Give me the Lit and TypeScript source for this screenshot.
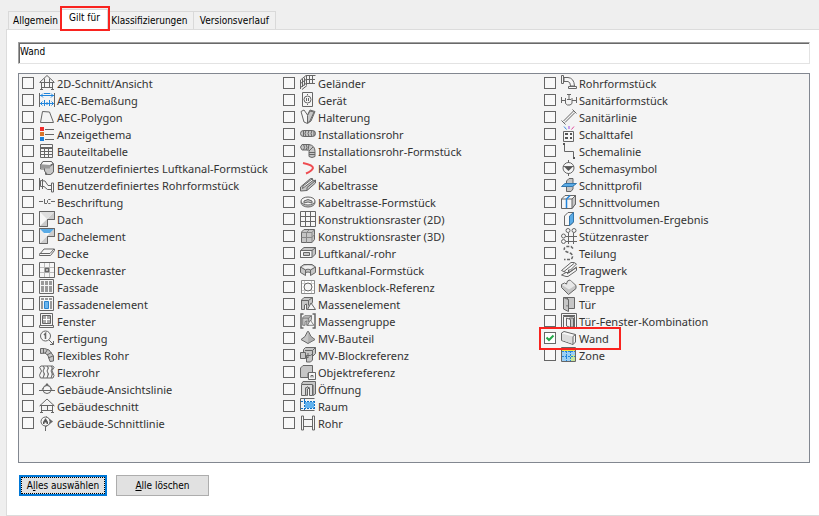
import { LitElement, html, svg, css, SVGTemplateResult } from "lit";
import { customElement, property, state } from "lit/decorators.js";

const mass = svg`<path class="m" d="M1.500 13.500V4L4 1.500h8.500V6L9 13.500H6.500V8L4.500 9v4.500z"/><path class="l" d="M1.500 4.500h7v5M8.500 4.500l4-3"/><path class="w" d="M7.500 13.500L11 7l4.500 6.500z"/>`;

const icons: Record<string, SVGTemplateResult> = {
  section: svg`<path class="l" d="M.500 7.500L8 .500l7.500 7M2.500 7v7.500M13.500 7v7.500M1 7.500h14M3 12.500h10M5.500 3.500v9M10.500 3.500v9M1 14.500h3M12 14.500h3"/>`,
  houseCut: svg`<path class="l" d="M.500 8L8 1l7.500 7M2.500 7v7M13.500 7v7M1 7.500h14M3 12.500h10M8.500 7v5M1 14.500h3M12 14.500h3"/>`,
  dimension: svg`<path class="l" d="M.5 1v14M15.500 1v14"/><path class="b" d="M1 3.500h14M5 1.500h6M4 1.500L2 3.500l2 2M12 1.500l2 2-2 2M1 11.500h14M5.500 8v6M10.500 8v6M3.500 9.500l-2 2 2 2M12.500 9.500l2 2-2 2M8 10v3"/>`,
  polygon: svg`<path class="l" d="M1.500 13.500L3.500 2.500l7 .5 4 10.500z"/>`,
  theme: svg`<path fill="#f02b2b" d="M1 1h4v4H1z"/><path fill="#d9762b" d="M1 6h4v4H1z"/><path fill="#1a80dc" d="M1 11h4v4H1z"/><path class="l" d="M6 3.500h9M6 8.500h9M6 13.500h9"/>`,
  table: svg`<path class="w" d="M1.500 1.500h12v13h-12z"/><path class="l" d="M2 5.500h12M2 8.500h12M2 11.500h12M5.500 5v9M9.500 5v9M2 4.500h11"/>`,
  duct: svg`<path class="w" d="M1.500 5L4 1.500h8.500L14.500 4v8l-3 2.500h-5V9h-5z"/><path class="m" d="M5.500 6h6l3-2v8l-3 2.500h-3L5.500 11z"/><path class="w" d="M1.500 5L4 1.500h8.500L14 3.500l-3 2z"/><path fill="#999" d="M1.500 5h9.500v3.500H1.500z"/>`,
  pipeCustom: svg`<path class="w" d="M1.500 3.500L6 4l3 4.500h4.500v4H8.500L5 9.500H1.500z"/><path class="l" d="M.500 1v12M3.500 2v10"/><path class="w" d="M12.500 6v9h2V6z"/>`,
  label: svg`<path class="l" d="M0 7.500h4M12 7.500h4M5.500 5v4.500h2.500M11.500 5.500H9.500l-1 1v2l1 1h2"/>`,
  roof: svg`<path class="w" d="M.5.500h15v8h-7v7h-8z"/><path fill="#c9c9c9" d="M1 15L8 8v7zM8 8l7-7v7z"/><path fill="#f7f7f7" d="M1 1h13L8 8 1 14z"/><path fill="#dedede" d="M1 1l7 7L15 1z"/><path class="l" d="M.500.500h15v8h-7v7h-8z"/>`,
  roofPart: svg`<path class="w" d="M.5.500h15v8h-7v7h-8z"/><path fill="#ccc" d="M1 15L8 8v7zM8 8l7-7v7z"/><path fill="#ededed" d="M1 1l7 7-7 7z"/><path fill="#5aabe6" d="M1 1h14l-4 4H5z"/><path class="l" d="M.5.500h15v8h-7v7h-8z"/>`,
  slab: svg`<path class="w" d="M.5 9.500L5 4h10.500v1.500L11.500 10.500H.5z"/><path class="l" d="M.5 8.500h10.500L15 4"/>`,
  ceiling: svg`<path class="w" d="M.500.500h15v15h-15z"/><path stroke="#bbb" d="M5.500 1v14M10.500 1v14M1 5.500h14M1 10.500h14"/><path class="w" stroke-width="1.500" d="M6.500 6.500h3v3h-3z"/>`,
  facade: svg`<path class="w" d="M.5.500h14v14h-14z"/><path fill="#999" d="M2 2h3v4H2zM6 2h3v4H6zM10 2h3v4h-3zM2 7h3v6H2zM6 7h3v6H6zM10 7h3v6h-3z"/>`,
  facadePart: svg`<path class="w" d="M.5.500h14v14h-14z"/><path fill="#999" d="M2 2h3v2H2zM6 2h3v2H6zM10 2h3v2h-3zM2 5h2v8H2zM11 5h2v8h-2z"/><path fill="#6bb4ec" stroke="#2783cf" d="M5.500 5.500h4v7h-4z"/>`,
  window: svg`<path class="w" d="M1.500 .5h12v12h-12z"/><path fill="#aaa" stroke="#666" d="M3.500 2.500h8v8h-8z"/><path stroke="#fff" d="M7.500 3v7M4 6.500h7"/><path class="w" d="M.500 14.500h14v-2H.500z"/>`,
  fabrication: svg`<circle class="w" cx="6.500" cy="6" r="5"/><path class="l" stroke-width="1.500" d="M5 5l1.500-1.500v5.500"/><path class="l" d="M10 10l4.500 4.500M11 14.500h3.500V11"/>`,
  flexPipe: svg`<path class="m" d="M1.500 1.500h4L10 3l4.500 6v5l-3.500.5-2-6-3-2.500-4.500.5z"/><path class="l" d="M4.500 1.500v5M8.500 2.500l-2.500 4M12.500 5.500L8 8M14 9l-5 2"/>`,
  flex: svg`<path class="w" d="M2 2Q-.5 3 1.500 5t0 4 0 5H14q2-2.500 0-5t0-4 0-3z"/><path class="m" d="M4 2l1.500 2L4 7l1.500 3L4 14M8 2l1.500 2L8 7l1.500 3L8 14M12 2l1.500 2L12 7l1.500 3-1.500 4"/>`,
  elevation: svg`<path fill="#666" d="M2.500 8.500L8 2l5.500 6.500z"/><circle class="w" cx="8" cy="8.500" r="4"/><path class="l" d="M0 9.500h16"/>`,
  sectionLine: svg`<path fill="#666" d="M7 1l7 5.500L7 12z"/><circle class="w" cx="6.500" cy="6.500" r="4.500"/><path fill="#555" d="M4 7l2.500-4L9 7v2H7.500V7.500h-2V9H4z"/><path class="l" d="M6.500 11v5"/>`,
  railing: svg`<path class="l" d="M.500 14V5L6 .500h9.500M.500 8.500L6 4.500h9M.500 12.500L6 8.500h9M2.500 4v8M4.500 2.500v8M6.500 1v9M9.500 1v8M12.500 1v8M2 14.500l5-4"/>`,
  device: svg`<path class="w" d="M2.500.500h10v14h-10z"/><circle class="w" cx="7.500" cy="7.500" r="3.500"/><path class="l" d="M6.500 6v3M8.500 6v3M7 2.500h1M7 12.500h1"/>`,
  hanger: svg`<path class="w" d="M1 2.500L4 1l3.500 5L10 1l5 1.500L11 12l-3.500 2.500L4 13z"/><path class="m" d="M7.500 6.500L10 2l4 1-4 9-2.500 2z"/>`,
  conduit: svg`<rect class="m" x=".5" y="4.500" width="15" height="6" rx="3"/><path class="l" d="M3.500 4.500v6M6 4.500L5 7.500l1 3M9 4.500L8 7.500l1 3M12 4.500l-1 3 1 3M14 5v5"/>`,
  conduitFit: svg`<path class="m" d="M2 1.500h7q6 1 6 7v5q-3 2-6 0V8.500L7.500 7H2q-3-3 0-5.500z"/><path class="l" d="M3.500 1.500q2 3 0 5.500M6 1.500q2 3 0 5.500M9 1.500L8 7M13 4L9 8M15 9.500H9M15 11.500H9"/>`,
  cable: svg`<path fill="none" stroke="#ee4b50" stroke-width="2" d="M3 3Q13 5 13 8 12 11 6 13.500"/>`,
  tray: svg`<path class="m" d="M.500 10L10.500 1.500h2L13 4l2.500-1v3L7 13.500l-6.500.5z"/><path class="w" d="M2.500 11.500L13 3.500l-1-1.500L3 9z"/><path class="l" d="M7 13V10.500L15 4"/>`,
  trayFit: svg`<ellipse class="m" cx="8" cy="8.500" rx="7" ry="4.500"/><ellipse class="w" cx="8" cy="7" rx="7" ry="4"/><path class="m" d="M4 9V7q4-3 8 0v2q-4-2-8 0z"/>`,
  grid2: svg`<path class="w" d="M.5.500h15v15h-15z"/><path class="l" d="M5.500 0v16M10.500 0v16M0 5.500h16M0 10.500h16"/>`,
  grid3: svg`<path class="m" d="M1.500 4L4 1.500h10.500v10L12 14.500H1.500z"/><path stroke="#888" d="M1.500 4.500H12v10M12 4.500l2.500-3M6.500 4.500v10M1.500 9.500H12l2.500-3M6.500 4.500l3-3"/>`,
  ductRect: svg`<path class="m" d="M.5 5.500L4 2.500h11.500V9L12 12.500H.5z"/><path class="w" d="M.5 5.500H12v7H.5z"/><path class="m" d="M3.500 7.500h6v3h-6z"/><path class="l" d="M12 5.500l3.500-3"/>`,
  ductFit: svg`<path class="m" d="M.500 5L4 2.500h8L15.500 5v5.500l-5 3v-3q-2.500-1-5 0v3l-5-3z"/><path class="l" d="M.500 5l5 3v3M15.500 5l-5 3v3M5.500 8q2.500-2 5 0"/><path fill="#f0f0f0" d="M2 5q6-3 12 0l-3.500 2q-2.500-1-5 0z"/>`,
  mask: svg`<path fill="#fff" stroke="#888" d="M1.500 1.500h13v13h-13z"/><path stroke="#ccc" d="M2 4.500h12M2 11.500h12M4.500 2v12M11.500 2v12"/><circle class="w" cx="8" cy="8" r="4"/>`,
  mass,
  massGroup: svg`<g transform="translate(1.500 1.500) scale(.8)">${mass}</g><path class="l" stroke-width="1.500" d="M3.500 1H1v14h2.500M12.500 1H15v14h-2.500"/>`,
  part: svg`<path class="m" stroke="#888" d="M1 9.500l4-3 2.500-5h1l2.500 5 4 3L8 13.500z"/><path fill="#999" d="M8.500 2L11 7l4 2.500-7 4z" opacity=".5"/>`,
  blockRef: svg`<path class="m" d="M3.500 2.500L5.500.500h10v6L13 9H3.500z"/><path class="m" d="M.5 5.500h5v6h-5zM6.500 8.500h4l2-1.500v6l-2 2h-4z"/><path class="l" d="M5 3.500h7.500V9M12.500 3.500l3-3M5.500 9L8 11V6"/>`,
  objectRef: svg`<path class="m" d="M.500 4L3 1.500h9.500V9H8v4.500H.500z"/><path class="w" d="M8.500 8.500h7v7h-7z"/><path class="l" d="M11 13.500v-2h2v2"/>`,
  opening: svg`<path class="m" d="M1.500 3L3 .500h12.500V13L13 14.500V4"/><path fill="#ddd" stroke="#666" d="M1.500 3.500h11v11H9.500V7q-2-2-4 0v7.500h-4z"/><path class="m" d="M5.500 14V7q2-2 4 0l-2 1v6.500z"/>`,
  room: svg`<path fill="#63b2ee" d="M5 4h9v6H5z"/><path class="l" d="M14.500.500H.500v12h14"/><path stroke="#1572c4" fill="none" stroke-dasharray="2 1" d="M1 3.500h13.500M1 10.500h13.500M4.500 1v11M14.500 3v8"/>`,
  pipe: svg`<path class="w" d="M3.500 4.500h9v7h-9z"/><path class="w" d="M1.500 1h2v14h-2zM12.500 1h2v14h-2z"/>`,
  pipeFit: svg`<path class="w" d="M3 2.500h4q6 .5 6.500 8.500h-4Q9.500 7 7 6.500H3z"/><path class="w" d="M.5.500h2v8h-2zM7.500 11.500h8v2h-8z"/>`,
  plumbFit: svg`<path class="l" d="M.5 5v6M15.500 5v6M.5 8.500h4M11 8.500h4.500M4.500 6v5.500l2 1.500h2.500l2-1.500V6M8 2v5M6 2.500h4M6 7.500h4"/>`,
  plumbLine: svg`<path class="l" d="M2.500 12L12.500 2M4 13.500L14 3.500M.5 11.500l4 4M11.500.500l4 4"/>`,
  panel: svg`<path stroke="#3a8be0" d="M3 .5l2.500 3"/><path stroke="#9b4be0" d="M8 0v3"/><path stroke="#e04b9b" d="M13 .5l-2.500 3"/><path class="w" d="M2.500 5.500h10v10h-10z"/><path fill="#555" d="M4 7h3v2H4zM9 7h2v2H9zM4 11h3v2H4zM9 11h2v2H9z"/>`,
  schemeLine: svg`<path class="l" d="M3.500 2v6.500h9V14"/><path fill="#555" d="M2 0h2v2H2zM12 14h2v2h-2z"/>`,
  schemeSymbol: svg`<circle class="w" cx="7.500" cy="8" r="5.500"/><path class="l" d="M7.500 0v3M7.500 13v3M2 6.500h11"/><path fill="#555" d="M3.500 7h8l-4 4z"/>`,
  profile: svg`<path class="m" d="M5.500 4L8 1.500h4V12L10 14.500H5.500z"/><path fill="#5aabe6" stroke="#3277ad" d="M.5 9.500L4 6.500h11.500l-4 3z"/>`,
  volume: svg`<path class="w" d="M.500 5L4 1.500h10.500V10L11 14.500H.500z"/><path class="m" d="M11 5l3.500-3.500V10L11 14.500z"/><path class="l" d="M.500 5h10.500"/><path class="b" stroke-width="1.500" d="M5.500 14V5L9 1.500"/>`,
  volumeResult: svg`<path class="w" d="M3.500 5L7 1.500h5.500V11L9 14.500H3.500z"/><path fill="#5aabe6" stroke="#3277ad" d="M8.500 5l4-3.500V11l-4 3.500z"/>`,
  columns: svg`<g class="w"><circle cx="7" cy="2.500" r="2"/><circle cx="13" cy="2.500" r="2"/><circle cx="2.500" cy="8" r="2"/><circle cx="2.500" cy="13.500" r="2"/></g><path class="l" d="M7.500 5v11M12.500 5v11M5 8.500h11M5 13.500h11"/>`,
  division: svg`<path class="l" stroke-width="1.500" stroke-dasharray="3 1.500" d="M12 3.500L10 1.500H5Q1.500 4 5 6.500l5 2q3 3 0 6H3"/>`,
  beam: svg`<path class="w" d="M.5 8.500L10 .5h3l2.500 1.500-6 6H7.500v2H9l6.500-4.500v3L7 14.500H5L.500 13 5 10.500z"/><path class="l" d="M3 9.500L13 1.500M6 12l9.500-7M5 10.500h4"/>`,
  stair: svg`<path class="m" d="M.500 8.500V5.500L3.500 4l2 1 1-3L9 1l6 5.500v3l-7.500 6z"/><path fill="#e8e8e8" d="M1 6l2.500-1.500L6 6l1-3.500L9.500 1.500 14 6.500 8 10.500z"/>`,
  door: svg`<path class="m" d="M6.500 1.500h7v11h-7z"/><path class="m" d="M2.500 1.500l5 2v12l-5-2.500z"/><path class="l" d="M2.500 1.500h6M6 9v1.500"/>`,
  doorWindow: svg`<path class="w" d="M.5.500h15v14H.5z"/><path class="l" d="M2.500 14V3.500h11V14M2 2.500h12"/><path class="m" d="M8.500 5h4v9h-4z"/><path class="w" d="M5.500 5l4 1.500v8l-4-1.500z"/>`,
  wall: svg`<path class="w" d="M.500 3L3 1.500l11.500 3V12L12 14.500l-11.500-4z"/><path fill="#dcdcdc" d="M1 3.500l11 3v7.500l-11-4z"/><path class="l" d="M12 14.500V6.500l2.500-2"/>`,
  zone: svg`<path fill="#f3df43" d="M1 1h13v3H1z"/><path fill="#c7e59a" d="M9 8h5v6H9z"/><path fill="#9bcff5" d="M1 4h13v4H1zM1 8h8v6H1z"/><path class="l" d="M.500.500h14v14h-14z"/><path class="b" stroke-dasharray="2 1" d="M1 4.500h13M1 9.500h13M5.500 1v13M9.500 1v13"/>`,
};

type Item = [label: string, icon: string];

const columns: Item[][] = [
  [
    ["2D-Schnitt/Ansicht", "section"], ["AEC-Bemaßung", "dimension"], ["AEC-Polygon", "polygon"],
    ["Anzeigethema", "theme"], ["Bauteiltabelle", "table"],
    ["Benutzerdefiniertes Luftkanal-Formstück", "duct"], ["Benutzerdefiniertes Rohrformstück", "pipeCustom"],
    ["Beschriftung", "label"], ["Dach", "roof"], ["Dachelement", "roofPart"], ["Decke", "slab"],
    ["Deckenraster", "ceiling"], ["Fassade", "facade"], ["Fassadenelement", "facadePart"],
    ["Fenster", "window"], ["Fertigung", "fabrication"], ["Flexibles Rohr", "flexPipe"],
    ["Flexrohr", "flex"], ["Gebäude-Ansichtslinie", "elevation"], ["Gebäudeschnitt", "houseCut"],
    ["Gebäude-Schnittlinie", "sectionLine"],
  ],
  [
    ["Geländer", "railing"], ["Gerät", "device"], ["Halterung", "hanger"], ["Installationsrohr", "conduit"],
    ["Installationsrohr-Formstück", "conduitFit"], ["Kabel", "cable"], ["Kabeltrasse", "tray"],
    ["Kabeltrasse-Formstück", "trayFit"], ["Konstruktionsraster (2D)", "grid2"],
    ["Konstruktionsraster (3D)", "grid3"], ["Luftkanal/-rohr", "ductRect"], ["Luftkanal-Formstück", "ductFit"],
    ["Maskenblock-Referenz", "mask"], ["Massenelement", "mass"], ["Massengruppe", "massGroup"],
    ["MV-Bauteil", "part"], ["MV-Blockreferenz", "blockRef"], ["Objektreferenz", "objectRef"],
    ["Öffnung", "opening"], ["Raum", "room"], ["Rohr", "pipe"],
  ],
  [
    ["Rohrformstück", "pipeFit"], ["Sanitärformstück", "plumbFit"], ["Sanitärlinie", "plumbLine"],
    ["Schalttafel", "panel"], ["Schemalinie", "schemeLine"], ["Schemasymbol", "schemeSymbol"],
    ["Schnittprofil", "profile"], ["Schnittvolumen", "volume"], ["Schnittvolumen-Ergebnis", "volumeResult"],
    ["Stützenraster", "columns"], ["Teilung", "division"], ["Tragwerk", "beam"], ["Treppe", "stair"],
    ["Tür", "door"], ["Tür-Fenster-Kombination", "doorWindow"], ["Wand", "wall"], ["Zone", "zone"],
  ],
];

@customElement("type-icon")
export class TypeIcon extends LitElement {
  @property() name = "";

  static styles = css`
    :host { display: block; width: 16px; height: 16px; }
    svg { display: block; }
    .l { fill: none; stroke: #666; }
    .w { fill: #f6f6f6; stroke: #666; }
    .m { fill: #c6c6c6; stroke: #666; }
    .b { fill: none; stroke: #2185dc; }
  `;

  render() {
    return html`<svg width="16" height="16" viewBox="0 0 16 16" fill="none" aria-hidden="true">${icons[this.name]}</svg>`;
  }
}

@customElement("app-root")
export class AppRoot extends LitElement {
  @state() private checked = new Set<string>(["Wand"]);

  static styles = css`
    :host {
      display: block;
      box-sizing: border-box;
      min-height: 100vh;
      padding: 9px 0 0 6px;
      background: #efefef;
      color: #000;
      font: 10px/14px "DejaVu Sans Condensed", "Noto Sans", sans-serif;
    }
    button, input { font: inherit; color: inherit; }
    .tabs { display: flex; align-items: flex-end; padding-left: 2px; height: 20px; }
    .tab {
      box-sizing: border-box;
      min-width: 82px;
      height: 18px;
      padding: 0 4px;
      border: 1px solid #d9d9d9;
      border-bottom: 0;
      border-left-width: 0;
      background: #f0f0f0;
      white-space: nowrap;
    }
    .tab:first-child { min-width: 53px; border-left-width: 1px; padding: 0 3px 0 4px; }
    .tab:nth-child(3) { min-width: 86px; padding: 0 4px 0 2px; }
    .tab.current {
      position: relative;
      min-width: 46px;
      height: 21px;
      margin-bottom: -1px;
      padding: 0 7px 4px;
      background: #fff;
    }
    .tab.current::after {
      content: "";
      position: absolute;
      inset: -4px -3px -1px -2px;
      border: 2px solid #f9231f;
    }
    .panel {
      padding: 12px 9px 19px 11px;
      border: 1px solid #dcdcdc;
      border-right: 0;
      background: #fff;
    }
    .name {
      box-sizing: border-box;
      display: block;
      width: 100%;
      height: 22px;
      margin: 0;
      padding: 0 0 3px 1px;
      border: 1px solid #a0a0a0;
      border-right-color: #e3e3e3;
      border-bottom-color: #e3e3e3;
      border-radius: 0;
      box-shadow: inset 1px 1px #696969;
      background: #fff;
      outline: 0;
    }
    .list {
      display: grid;
      grid-template-columns: repeat(3, minmax(0, 1fr));
      margin: 9px 0 12px;
      padding: 1px 4px 30px 3px;
      border: 1px solid #828790;
      background: #f4f4f4;
    }
    .row {
      display: flex;
      width: fit-content;
      height: 17px;
      color: #333;
      font: 11px/17px "Noto Sans", "Open Sans", sans-serif;
      white-space: nowrap;
    }
    .row input {
      appearance: none;
      box-sizing: border-box;
      width: 12px;
      height: 12px;
      margin: 2px 5px 0 0;
      border: 1px solid #666;
      background: #f8f8f8;
    }
    .row input:checked {
      background: #fff url("data:image/svg+xml,%3Csvg xmlns='http://www.w3.org/2000/svg' viewBox='0 0 10 10'%3E%3Cpath d='M1.500 4.500l2.500 2.500 4.500-4.500' fill='none' stroke='%2325a84a' stroke-width='2'/%3E%3C/svg%3E");
    }
    .row span { padding-left: 2px; }
    .marked { position: relative; }
    .marked::after {
      content: "";
      position: absolute;
      inset: -3px -12px -3px -5px;
      border: 2px solid #f9231f;
    }
    .actions { display: flex; gap: 9px; padding-left: 1px; }
    .actions button {
      box-sizing: border-box;
      min-width: 93px;
      height: 21px;
      padding: 0 2px;
      border: 1px solid #adadad;
      background: #e1e1e1;
      white-space: nowrap;
    }
    .actions .default {
      min-width: 88px;
      border: 2px solid #0078d7;
      outline: 1px dotted #000;
      outline-offset: -3px;
      padding: 0;
    }
  `;

  private toggle(label: string) {
    const next = new Set(this.checked);
    if (!next.delete(label)) next.add(label);
    this.checked = next;
  }

  private selectAll() {
    this.checked = new Set(columns.flat().map(([label]) => label));
  }

  private row([label, icon]: Item) {
    return html`<label class="row ${label === "Wand" ? "marked" : ""}">
      <input type="checkbox" .checked=${this.checked.has(label)} @change=${() => this.toggle(label)} />
      <type-icon name=${icon}></type-icon><span>${label}</span>
    </label>`;
  }

  render() {
    return html`
      <div class="tabs" role="tablist">
        <button class="tab" role="tab" aria-selected="false">Allgemein</button>
        <button class="tab current" role="tab" aria-selected="true">Gilt für</button>
        <button class="tab" role="tab" aria-selected="false">Klassifizierungen</button>
        <button class="tab" role="tab" aria-selected="false">Versionsverlauf</button>
      </div>
      <main class="panel">
        <input class="name" type="text" aria-label="Name" .value=${"Wand"} />
        <div class="list" role="group" aria-label="Gilt für">
          ${columns.map((items) => html`<div>${items.map((item) => this.row(item))}</div>`)}
        </div>
        <div class="actions">
          <button class="default" @click=${this.selectAll}>A<u>l</u>les auswählen</button>
          <button @click=${() => (this.checked = new Set())}><u>A</u>lle löschen</button>
        </div>
      </main>
    `;
  }
}
